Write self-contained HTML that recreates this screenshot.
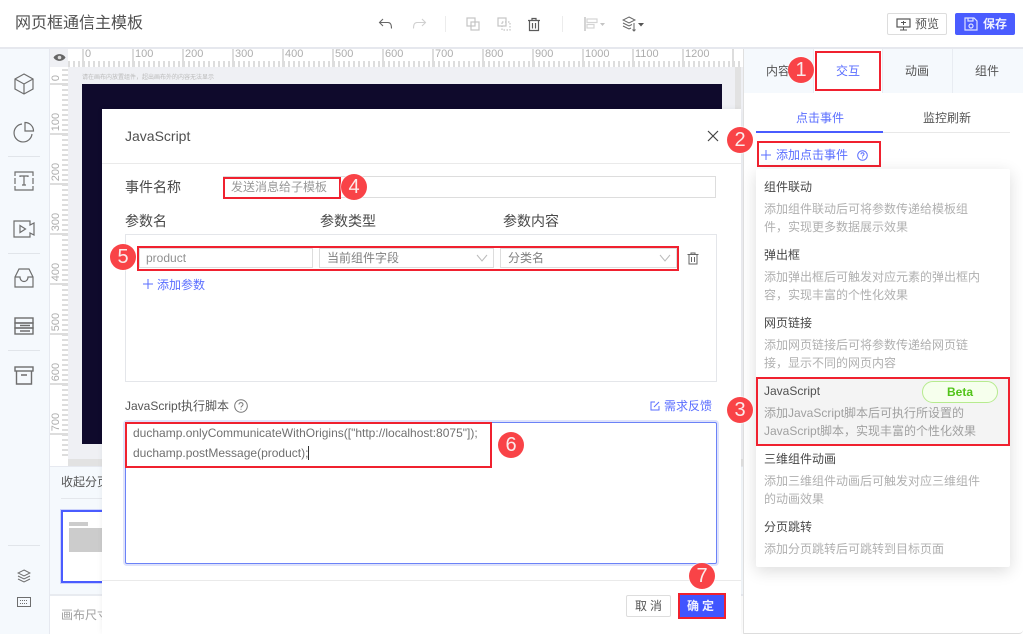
<!DOCTYPE html>
<html lang="zh">
<head>
<meta charset="utf-8">
<title>网页框通信主模板</title>
<style>
html,body{margin:0;padding:0;width:1023px;height:634px;overflow:hidden;background:#fff}
body{position:relative;font:12px/18px "Liberation Sans","Noto Sans CJK SC",sans-serif;color:#484848}
.a,.t,.rx,.b,svg.i{position:absolute}
.t{white-space:nowrap;line-height:18px}
.rx{border:2px solid #f0212f;box-sizing:border-box}
.b{width:26px;height:26px;border-radius:50%;background:#f94347;color:#fbeaea;font-size:20px;line-height:26px;text-align:center;box-shadow:0 0 0 1px rgba(255,255,255,.5);z-index:20;font-family:"Liberation Sans",sans-serif}
.blue{color:#5a6eff}
.d{color:#b0b0b0}
.inp{position:absolute;box-sizing:border-box;border:1px solid #ddd;background:#fff}
.rl{position:absolute;top:47px;color:#adadad;font-size:11px;line-height:14px;font-family:"Liberation Sans",sans-serif}
.vl{position:absolute;left:46px;width:20px;color:#adadad;font-size:11px;line-height:12px;transform:rotate(-90deg);transform-origin:center;text-align:center;font-family:"Liberation Sans",sans-serif}
.h{font-size:14px;color:#484848}
svg.i{fill:none;stroke:#6e6e6e;stroke-width:1.2}
</style>
</head>
<body>
<!-- top bar -->
<div class="t" style="left:15px;top:13px;font-size:16px;line-height:22px;color:#505050">网页框通信主模板</div>
<div class="a" style="left:0;top:47px;width:1023px;height:2px;background:#e6e8ee"></div>

<svg class="i" style="left:378px;top:16px;stroke:#666;stroke-width:1.1" width="16" height="16" viewBox="0 0 16 16"><path d="M5 3L1.500 6.500 5 10M2 6.500h8c2.500 0 3.500 2 3.500 6"/></svg>
<svg class="i" style="left:411px;top:16px;stroke:#d0d0d0;stroke-width:1.1" width="16" height="16" viewBox="0 0 16 16"><path d="M11 3l3.500 3.500L11 10M14 6.500H6c-2.500 0-3.500 2-3.500 6"/></svg>
<div class="a" style="left:445px;top:16px;width:1px;height:16px;background:#ececec"></div>
<svg class="i" style="left:466px;top:17px;stroke:#c4c4c4" width="14" height="14" viewBox="0 0 14 14"><rect x="1" y="1" width="8" height="8"/><rect x="5" y="5" width="8" height="8"/></svg>
<svg class="i" style="left:497px;top:17px;stroke:#c4c4c4" width="14" height="14" viewBox="0 0 14 14"><rect x="1" y="1" width="8" height="8"/><rect x="5" y="5" width="8" height="8" stroke-dasharray="1.500 1.500"/></svg>
<svg class="i" style="left:527px;top:17px;stroke:#5a5a5a" width="14" height="15" viewBox="0 0 14 15"><path d="M1 3.500h12M5 3V1.500h4V3M2.500 4v9.500h9V4M5.500 6v5.500M8.500 6v5.500"/></svg>
<div class="a" style="left:562px;top:16px;width:1px;height:16px;background:#ececec"></div>
<svg class="i" style="left:584px;top:17px;stroke:#d4d4d4" width="24" height="14" viewBox="0 0 24 14"><path d="M1 0v14" stroke-width="2"/><rect x="3" y="2" width="10" height="3.500"/><rect x="3" y="7.500" width="7" height="3.500"/><path d="M16 6h5l-2.500 3z" fill="#c4c4c4" stroke="none"/></svg>
<svg class="i" style="left:622px;top:16px;stroke:#666;stroke-width:1" width="23" height="16" viewBox="0 0 23 16"><path d="M7 1l6 3-6 3-6-3zM1 7l6 3 3-1.500M1 10l6 3 2-1M12 7v8M10.500 13.500L12 15l1.500-1.500"/><path d="M16 7h6l-3 3.500z" fill="#555" stroke="none"/></svg>

<div class="a" style="left:887px;top:13px;width:60px;height:22px;box-sizing:border-box;border:1px solid #ddd;border-radius:2px"></div>
<svg class="i" style="left:896px;top:18px;stroke:#555" width="15" height="13" viewBox="0 0 15 13"><rect x="1" y="1" width="13" height="8"/><path d="M7.500 9v3M4 12h7M5 4.500h5M7.500 3v4" stroke-width="1"/></svg>
<div class="t" style="left:915px;top:15px;color:#555">预览</div>
<div class="a" style="left:955px;top:13px;width:60px;height:22px;background:#4a5cff;border-radius:2px"></div>
<svg class="i" style="left:964px;top:17px;stroke:#dfe3ff" width="14" height="14" viewBox="0 0 14 14"><path d="M1 1h9l3 3v9H1zM4 1v3h5V1"/><circle cx="7" cy="9" r="2"/></svg>
<div class="t" style="left:983px;top:15px;color:#eef0ff;font-weight:bold">保存</div>

<!-- left sidebar -->
<div class="a" style="left:0;top:49px;width:49px;height:585px;background:#f5f9fd;border-right:1px solid #e6e9f0"></div>
<svg class="i" style="left:13px;top:72px" width="22" height="24" viewBox="0 0 22 24"><path d="M11 2l9 5v10l-9 5-9-5V7zM2 7l9 5 9-5M11 12v10"/></svg>
<svg class="i" style="left:13px;top:121px" width="22" height="22" viewBox="0 0 22 22"><path d="M9 3a9 9 0 1 0 10 10"/><path d="M12 1.500a8.500 8.500 0 0 1 8.500 8.500H12z"/></svg>
<div class="a" style="left:8px;top:156px;width:32px;height:1px;background:#e1e5ea"></div>
<svg class="i" style="left:14px;top:171px" width="20" height="20" viewBox="0 0 20 20"><path d="M1 5V1h18v4M1 15v4h18v-4M1 7v6M19 7v6M6 6V5h8v1M10 5v9M8 14h4"/></svg>
<svg class="i" style="left:13px;top:220px" width="22" height="18" viewBox="0 0 22 18"><path d="M1 1h16v4l4-2v12l-4-2v4H1zM1 5v2M1 11v2"/><path d="M7 5.500l5.500 3.500L7 12.500z"/></svg>
<div class="a" style="left:8px;top:253px;width:32px;height:1px;background:#e1e5ea"></div>
<svg class="i" style="left:14px;top:268px" width="20" height="20" viewBox="0 0 20 20"><path d="M1 9l4-8h10l4 8v10H1zM1 9h5c0 6 8 6 8 0h5"/></svg>
<svg class="i" style="left:14px;top:317px;stroke-width:1.400" width="20" height="18" viewBox="0 0 20 18"><rect x="1" y="1" width="18" height="5"/><rect x="1" y="6" width="18" height="5"/><rect x="1" y="11" width="18" height="6"/><path d="M6 8.500h10M6 14h10"/></svg>
<div class="a" style="left:8px;top:350px;width:32px;height:1px;background:#e1e5ea"></div>
<svg class="i" style="left:14px;top:366px;stroke-width:1.400" width="20" height="19" viewBox="0 0 20 19"><rect x="1" y="1" width="18" height="4"/><path d="M2.500 5v13h15V5M7 9h6"/></svg>
<div class="a" style="left:8px;top:545px;width:32px;height:1px;background:#e1e5ea"></div>
<svg class="i" style="left:17px;top:569px;stroke-width:1" width="14" height="14" viewBox="0 0 14 14"><path d="M7 1l6 3-6 3-6-3zM1 7l6 3 6-3M1 10l6 3 6-3"/></svg>
<svg class="i" style="left:17px;top:597px;stroke-width:1" width="14" height="10" viewBox="0 0 14 10"><rect x=".5" y=".5" width="13" height="9"/><path d="M3 3.500h8M3 6.500h8" stroke-dasharray="1 1"/></svg>

<!-- canvas -->
<div class="a" style="left:50px;top:49px;width:693px;height:418px;background:#eff0f4"></div>
<div class="a" style="left:50px;top:49px;width:693px;height:18px;background:#fff"></div>
<div class="a" style="left:50px;top:67px;width:18px;height:400px;background:#fff"></div>
<div class="a" style="left:50px;top:49px;width:18px;height:18px;background:#eff0f4"></div>
<svg class="a" style="left:53px;top:52px" width="13" height="11" viewBox="0 0 13 11"><path d="M.5 5.500C3 1 10 1 12.500 5.500 10 10 3 10 .5 5.500z" fill="#666"/><circle cx="6.500" cy="5.500" r="1.800" fill="#ddd"/></svg>
<div class="a" style="left:68px;top:61px;width:675px;height:6px;background:repeating-linear-gradient(90deg,#ddd 0 2px,transparent 2px 5px)"></div>
<div class="a" style="left:82px;top:49px;width:661px;height:18px;background:repeating-linear-gradient(90deg,#ddd 0 2px,transparent 2px 50px)"></div>
<div class="a" style="left:62px;top:69px;width:6px;height:390px;background:repeating-linear-gradient(180deg,#ddd 0 2px,transparent 2px 5px)"></div>
<div class="a" style="left:50px;top:83px;width:18px;height:376px;background:repeating-linear-gradient(180deg,#ddd 0 2px,transparent 2px 50px)"></div>
<div class="rl" style="left:85px">0</div><div class="rl" style="left:135px">100</div><div class="rl" style="left:185px">200</div><div class="rl" style="left:235px">300</div><div class="rl" style="left:285px">400</div><div class="rl" style="left:335px">500</div><div class="rl" style="left:385px">600</div><div class="rl" style="left:435px">700</div><div class="rl" style="left:485px">800</div><div class="rl" style="left:535px">900</div><div class="rl" style="left:585px">1000</div><div class="rl" style="left:635px">1100</div><div class="rl" style="left:685px">1200</div>
<div class="vl" style="top:72px">0</div><div class="vl" style="top:116px">100</div><div class="vl" style="top:166px">200</div><div class="vl" style="top:216px">300</div><div class="vl" style="top:266px">400</div><div class="vl" style="top:316px">500</div><div class="vl" style="top:366px">600</div><div class="vl" style="top:416px">700</div>
<div class="t" style="left:82px;top:74px;font-size:6px;line-height:8px;color:#bbb">请在画布内放置组件，超出画布外的内容无法显示</div>
<div class="a" style="left:82px;top:84px;width:640px;height:360px;background:#0f0a2c"></div>
<div class="a" style="left:68px;top:459px;width:675px;height:8px;background:#e2e2e2"></div>
<div class="a" style="left:735px;top:67px;width:6px;height:392px;background:#e2e2e2"></div>
<div class="a" style="left:50px;top:466px;width:693px;height:129px;background:#f5f9fd;border-top:1px solid #e6e9f0;box-sizing:border-box"></div>
<div class="t" style="left:61px;top:473px;color:#555">收起分页</div>
<div class="a" style="left:61px;top:498px;width:60px;height:1px;background:#e4e7ec"></div>
<div class="a" style="left:61px;top:510px;width:60px;height:73px;box-sizing:border-box;border:2px solid #4a5cff;outline:1px solid #cdd3fb;background:#fff"></div>
<div class="a" style="left:69px;top:522px;width:19px;height:4px;background:#ccc"></div>
<div class="a" style="left:69px;top:528px;width:40px;height:24px;background:#ccc"></div>
<div class="a" style="left:50px;top:594px;width:693px;height:2px;background:#e8ebf0"></div>
<div class="t" style="left:61px;top:606px;color:#a0a0a0">画布尺寸</div>

<!-- modal -->
<div class="a" style="left:102px;top:109px;width:639px;height:525px;background:#fff;box-shadow:0 0 6px rgba(0,0,0,.06)"></div>
<div class="t" style="left:125px;top:127px;font-size:14px;color:#505050">JavaScript</div>
<svg class="i" style="left:707px;top:130px;stroke:#444" width="12" height="12" viewBox="0 0 12 12"><path d="M1 1l10 10M11 1L1 11"/></svg>
<div class="a" style="left:102px;top:163px;width:639px;height:1px;background:#eaeaea"></div>
<div class="t h" style="left:125px;top:178px">事件名称</div>
<div class="inp" style="left:223px;top:176px;width:493px;height:22px"></div>
<div class="t" style="left:231px;top:178px;color:#999">发送消息给子模板</div>
<div class="rx" style="left:223px;top:177px;width:118px;height:22px"></div>
<div class="t h" style="left:125px;top:212px">参数名</div>
<div class="t h" style="left:320px;top:212px">参数类型</div>
<div class="t h" style="left:503px;top:212px">参数内容</div>
<div class="a" style="left:125px;top:234px;width:592px;height:148px;box-sizing:border-box;border:1px solid #e4e6ea"></div>
<div class="inp" style="left:139px;top:248px;width:174px;height:20px"></div>
<div class="t" style="left:146px;top:249px;color:#909090;font-family:'Liberation Sans',sans-serif">product</div>
<div class="inp" style="left:319px;top:248px;width:175px;height:20px"></div>
<div class="t" style="left:327px;top:249px;color:#808080">当前组件字段</div>
<svg class="i" style="left:476px;top:254px;stroke:#bbb;stroke-width:1" width="12" height="8" viewBox="0 0 12 8"><path d="M1 1l5 6 5-6"/></svg>
<div class="inp" style="left:500px;top:248px;width:177px;height:20px"></div>
<div class="t" style="left:508px;top:249px;color:#808080">分类名</div>
<svg class="i" style="left:659px;top:254px;stroke:#bbb;stroke-width:1" width="12" height="8" viewBox="0 0 12 8"><path d="M1 1l5 6 5-6"/></svg>
<div class="rx" style="left:137px;top:246px;width:542px;height:25px"></div>
<svg class="i" style="left:687px;top:252px;stroke:#666;stroke-width:1" width="12" height="13" viewBox="0 0 12 13"><path d="M.5 2.500h11M4 2V1h4v1M2 3v9h8V3M4.500 5v5M7.500 5v5"/></svg>
<svg class="i" style="left:143px;top:279px;stroke:#5a6eff;stroke-width:1" width="10" height="10" viewBox="0 0 10 10"><path d="M5 0v10M0 5h10"/></svg>
<div class="t blue" style="left:157px;top:276px">添加参数</div>
<div class="t" style="left:125px;top:397px;color:#555">JavaScript执行脚本</div>
<svg class="i" style="left:234px;top:399px;stroke:#777;stroke-width:1" width="14" height="14" viewBox="0 0 14 14"><circle cx="7" cy="7" r="6.300"/><path d="M5 5.500c0-2.500 4-2.500 4 0 0 1.500-2 1.500-2 3M7 9.700v1"/></svg>
<svg class="i" style="left:650px;top:401px;stroke:#5a6eff;stroke-width:1" width="10" height="10" viewBox="0 0 10 10"><path d="M5 1H1v8h8V5M4 6l5-5"/></svg>
<div class="t blue" style="left:664px;top:397px">需求反馈</div>
<div class="a" style="left:125px;top:422px;width:592px;height:142px;box-sizing:border-box;border:1px solid #6b82f7;border-radius:2px;box-shadow:0 0 0 2px #dfe3fb"></div>
<div class="t" style="left:133px;top:424px;color:#707070;font-family:'Liberation Sans',sans-serif">duchamp.onlyCommunicateWithOrigins(["http://localhost:8075"]);</div>
<div class="t" style="left:133px;top:444px;color:#707070;font-family:'Liberation Sans',sans-serif">duchamp.postMessage(product);</div>
<div class="a" style="left:308px;top:446px;width:1px;height:14px;background:#333"></div>
<div class="rx" style="left:125px;top:422px;width:367px;height:46px"></div>
<div class="a" style="left:102px;top:580px;width:639px;height:1px;background:#eaeaea"></div>
<div class="a" style="left:626px;top:595px;width:45px;height:22px;box-sizing:border-box;border:1px solid #ddd;border-radius:2px;text-align:center;line-height:20px;color:#555;letter-spacing:3px;padding-left:3px">取消</div>
<div class="a" style="left:680px;top:595px;width:44px;height:22px;background:#4055ff;text-align:center;line-height:22px;color:#eef0ff;letter-spacing:3px;font-weight:bold">确定</div>
<div class="rx" style="left:678px;top:593px;width:48px;height:26px"></div>

<!-- right panel -->
<div class="a" style="left:743px;top:49px;width:280px;height:585px;background:#fff;border-left:1px solid #e0e0e0;border-bottom:1px solid #ddd;border-bottom-right-radius:4px;box-sizing:border-box"></div>
<div class="a" style="left:744px;top:49px;width:279px;height:44px;background:#f5f9fd"></div>
<div class="a" style="left:814px;top:49px;width:68px;height:44px;background:#fff"></div>
<div class="a" style="left:813px;top:49px;width:1px;height:44px;background:#e8ecf2"></div>
<div class="a" style="left:882px;top:49px;width:1px;height:44px;background:#e8ecf2"></div>
<div class="a" style="left:952px;top:49px;width:1px;height:44px;background:#e8ecf2"></div>
<div class="t" style="left:766px;top:62px;color:#555">内容</div>
<div class="t blue" style="left:836px;top:62px">交互</div>
<div class="t" style="left:905px;top:62px;color:#555">动画</div>
<div class="t" style="left:975px;top:62px;color:#555">组件</div>
<div class="rx" style="left:815px;top:51px;width:66px;height:40px"></div>
<div class="t blue" style="left:796px;top:109px">点击事件</div>
<div class="t" style="left:923px;top:109px;color:#555">监控刷新</div>
<div class="a" style="left:756px;top:132px;width:254px;height:1px;background:#e8e8e8"></div>
<div class="a" style="left:756px;top:131px;width:127px;height:2px;background:#4a5cff"></div>
<svg class="i" style="left:761px;top:150px;stroke:#5a6eff;stroke-width:1" width="10" height="10" viewBox="0 0 10 10"><path d="M5 0v10M0 5h10"/></svg>
<div class="t blue" style="left:776px;top:146px">添加点击事件</div>
<svg class="i" style="left:857px;top:150px;stroke:#5a6eff;stroke-width:1" width="11" height="11" viewBox="0 0 11 11"><circle cx="5.500" cy="5.500" r="4.800"/><path d="M4 4.300c0-2 3-2 3 0 0 1.100-1.500 1.100-1.500 2.300M5.500 7.500v.8"/></svg>
<div class="rx" style="left:757px;top:141px;width:124px;height:26px"></div>

<div class="a" style="left:756px;top:169px;width:254px;height:398px;background:#fff;border-radius:2px;box-shadow:0 4px 16px rgba(0,0,0,.14)"></div>
<div class="t" style="left:764px;top:178px">组件联动</div>
<div class="t d" style="left:764px;top:200px">添加组件联动后可将参数传递给模板组</div>
<div class="t d" style="left:764px;top:218px">件，实现更多数据展示效果</div>
<div class="t" style="left:764px;top:246px">弹出框</div>
<div class="t d" style="left:764px;top:268px">添加弹出框后可触发对应元素的弹出框内</div>
<div class="t d" style="left:764px;top:286px">容，实现丰富的个性化效果</div>
<div class="t" style="left:764px;top:314px">网页链接</div>
<div class="t d" style="left:764px;top:336px">添加网页链接后可将参数传递给网页链</div>
<div class="t d" style="left:764px;top:354px">接，显示不同的网页内容</div>
<div class="a" style="left:756px;top:378px;width:254px;height:67px;background:#f4f4f4"></div>
<div class="t" style="left:764px;top:382px;color:#505050">JavaScript</div>
<div class="a" style="left:922px;top:381px;width:76px;height:22px;box-sizing:border-box;border:1px solid #b7eb8f;border-radius:11px;background:#f6ffed;text-align:center;line-height:20px;color:#52c41a;font-weight:bold">Beta</div>
<div class="t d" style="left:764px;top:404px;color:#a0a0a0">添加JavaScript脚本后可执行所设置的</div>
<div class="t d" style="left:764px;top:422px;color:#a0a0a0">JavaScript脚本，实现丰富的个性化效果</div>
<div class="rx" style="left:756px;top:377px;width:254px;height:69px"></div>
<div class="t" style="left:764px;top:450px">三维组件动画</div>
<div class="t d" style="left:764px;top:472px">添加三维组件动画后可触发对应三维组件</div>
<div class="t d" style="left:764px;top:490px">的动画效果</div>
<div class="t" style="left:764px;top:518px">分页跳转</div>
<div class="t d" style="left:764px;top:540px">添加分页跳转后可跳转到目标页面</div>

<!-- badges -->
<div class="b" style="left:788px;top:57px">1</div>
<div class="b" style="left:727px;top:127px">2</div>
<div class="b" style="left:727px;top:397px">3</div>
<div class="b" style="left:341px;top:174px">4</div>
<div class="b" style="left:110px;top:244px">5</div>
<div class="b" style="left:498px;top:432px">6</div>
<div class="b" style="left:689px;top:563px">7</div>
</body>
</html>
